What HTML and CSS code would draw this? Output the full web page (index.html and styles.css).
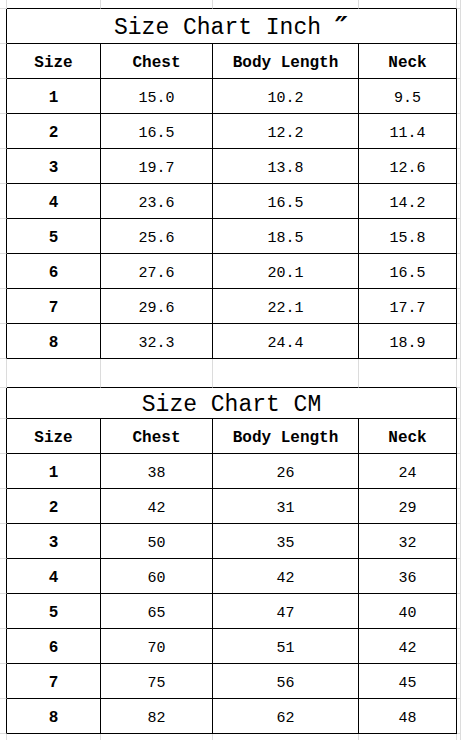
FILE: index.html
```html
<!DOCTYPE html>
<html>
<head>
<meta charset="utf-8">
<link rel="stylesheet" href="styles.css">
</head>
<body>
<div class="sheet">
  <div class="row above h9"><div class="lead"></div><div class="c"></div><div class="c"></div><div class="c"></div><div class="c"></div><div class="s"></div></div>
  <div class="row tr h35"><div class="lead"></div><div class="c title">Size Chart Inch<span class="prime">″</span></div><div class="s"></div></div>
  <div class="row tr h35"><div class="lead"></div><div class="c b">Size</div><div class="c b">Chest</div><div class="c b">Body Length</div><div class="c b">Neck</div><div class="s"></div></div>
  <div class="row tr h35"><div class="lead"></div><div class="c b">1</div><div class="c">15.0</div><div class="c">10.2</div><div class="c">9.5</div><div class="s"></div></div>
  <div class="row tr h35"><div class="lead"></div><div class="c b">2</div><div class="c">16.5</div><div class="c">12.2</div><div class="c">11.4</div><div class="s"></div></div>
  <div class="row tr h35"><div class="lead"></div><div class="c b">3</div><div class="c">19.7</div><div class="c">13.8</div><div class="c">12.6</div><div class="s"></div></div>
  <div class="row tr h35"><div class="lead"></div><div class="c b">4</div><div class="c">23.6</div><div class="c">16.5</div><div class="c">14.2</div><div class="s"></div></div>
  <div class="row tr h35"><div class="lead"></div><div class="c b">5</div><div class="c">25.6</div><div class="c">18.5</div><div class="c">15.8</div><div class="s"></div></div>
  <div class="row tr h35"><div class="lead"></div><div class="c b">6</div><div class="c">27.6</div><div class="c">20.1</div><div class="c">16.5</div><div class="s"></div></div>
  <div class="row tr h35"><div class="lead"></div><div class="c b">7</div><div class="c">29.6</div><div class="c">22.1</div><div class="c">17.7</div><div class="s"></div></div>
  <div class="row tr h35"><div class="lead"></div><div class="c b">8</div><div class="c">32.3</div><div class="c">24.4</div><div class="c">18.9</div><div class="s"></div></div>
  <div class="row above h29"><div class="lead"></div><div class="c"></div><div class="c"></div><div class="c"></div><div class="c"></div><div class="s"></div></div>
  <div class="row tr h31"><div class="lead"></div><div class="c title">Size Chart CM</div><div class="s"></div></div>
  <div class="row tr h35"><div class="lead"></div><div class="c b">Size</div><div class="c b">Chest</div><div class="c b">Body Length</div><div class="c b">Neck</div><div class="s"></div></div>
  <div class="row tr h35"><div class="lead"></div><div class="c b">1</div><div class="c">38</div><div class="c">26</div><div class="c">24</div><div class="s"></div></div>
  <div class="row tr h35"><div class="lead"></div><div class="c b">2</div><div class="c">42</div><div class="c">31</div><div class="c">29</div><div class="s"></div></div>
  <div class="row tr h35"><div class="lead"></div><div class="c b">3</div><div class="c">50</div><div class="c">35</div><div class="c">32</div><div class="s"></div></div>
  <div class="row tr h35"><div class="lead"></div><div class="c b">4</div><div class="c">60</div><div class="c">42</div><div class="c">36</div><div class="s"></div></div>
  <div class="row tr h35"><div class="lead"></div><div class="c b">5</div><div class="c">65</div><div class="c">47</div><div class="c">40</div><div class="s"></div></div>
  <div class="row tr h35"><div class="lead"></div><div class="c b">6</div><div class="c">70</div><div class="c">51</div><div class="c">42</div><div class="s"></div></div>
  <div class="row tr h35"><div class="lead"></div><div class="c b">7</div><div class="c">75</div><div class="c">56</div><div class="c">45</div><div class="s"></div></div>
  <div class="row tr h35"><div class="lead"></div><div class="c b">8</div><div class="c">82</div><div class="c">62</div><div class="c">48</div><div class="s"></div></div>
  <div class="row h35"><div class="lead"></div><div class="c"></div><div class="c"></div><div class="c"></div><div class="c"></div><div class="s"></div></div>
</div>
</body>
</html>
```

FILE: styles.css
```css
html, body {
  margin: 0;
  padding: 0;
  background: #ffffff;
  overflow: hidden;
}

.sheet {
  display: flex;
  flex-direction: column;
  width: 461px;
  font-family: "Liberation Mono", "DejaVu Sans Mono", monospace;
  font-size: 15px;
  color: #000;
}

.row {
  display: grid;
  grid-template-columns: 7px 94px 112px 146px 98px 4px;
}

.row > div {
  box-sizing: border-box;
  border-right: 1px solid #dcdcdc;
  border-bottom: 1px solid #dcdcdc;
  display: flex;
  align-items: center;
  justify-content: center;
  white-space: nowrap;
}

.tr > .c {
  padding-top: 4px;
}

.h9 { height: 9px; }
.h29 { height: 29px; }
.h31 { height: 31px; }
.h35 { height: 35px; }

.tr > .c {
  border-right-color: #000;
  border-bottom-color: #000;
}

.tr > .lead {
  border-right-color: #000;
}

.above > .c {
  border-bottom-color: #000;
}

.tr > .b {
  font-weight: bold;
  font-size: 16px;
  padding-top: 3px;
}

.tr > .title {
  grid-column: span 4;
  font-size: 23px;
  padding-top: 4px;
}

.prime {
  display: inline-block;
  width: 14px;
  margin-left: 14px;
  align-self: flex-start;
  margin-top: 1px;
  font-family: "DejaVu Sans", sans-serif;
  font-style: italic;
  font-weight: bold;
  font-size: 28px;
  line-height: 28px;
}
```
